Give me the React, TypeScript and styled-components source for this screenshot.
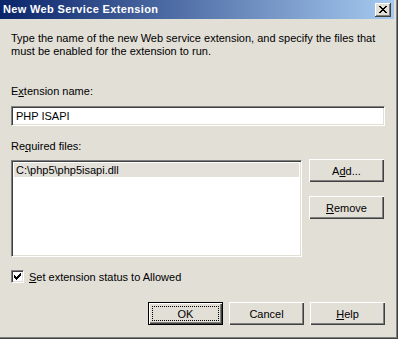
import React from "react";
import styled, { createGlobalStyle } from "styled-components";

const GlobalStyle = createGlobalStyle`
  html, body {
    margin: 0;
    padding: 0;
    background: #e2dfd7;
  }
  body {
    font-family: Tahoma, "Liberation Sans", Arial, sans-serif;
    font-size: 11px;
    color: #000;
  }
`;

const Window = styled.div`
  width: 398px;
  height: 339px;
  box-sizing: border-box;
  background: #e2dfd7;
  border-right: 1px solid #404040;
  border-bottom: 1px solid #404040;
  box-shadow: inset -1px -1px 0 #808080;
  display: flex;
  flex-direction: column;
`;

const TitleBar = styled.div`
  height: 19px;
  margin-right: 3px;
  background: linear-gradient(to right, #0a246a, #a6caf0);
  display: flex;
  align-items: center;
  padding: 0 3px 0 3px;
`;

const Title = styled.span`
  flex: 1;
  color: #fff;
  font-weight: bold;
  font-size: 11px;
  letter-spacing: 0.35px;
  line-height: 19px;
  white-space: nowrap;
`;

const CloseButton = styled.button`
  width: 16px;
  height: 14px;
  padding: 0;
  background: #e2dfd7;
  border: none;
  box-shadow: inset -1px -1px 0 #404040, inset 1px 1px 0 #fff,
    inset -2px -2px 0 #808080;
  display: flex;
  align-items: center;
  justify-content: center;
`;

const Body = styled.div`
  flex: 1;
  padding: 13px 12px 0 11px;
  display: flex;
  flex-direction: column;
`;

const Text = styled.p<{ $top?: number }>`
  margin: ${({ $top }) => $top ?? 0}px 0 0 0;
  line-height: 13px;
`;

const TextInput = styled.div`
  margin-top: 8px;
  height: 20px;
  box-sizing: border-box;
  background: #fff;
  border-top: 1px solid #808080;
  border-left: 1px solid #808080;
  border-right: 1px solid #fff;
  border-bottom: 1px solid #fff;
  box-shadow: inset 1px 1px 0 #404040, inset -1px -1px 0 #e2dfd7;
  padding: 0 4px;
  line-height: 18px;
`;

const FilesRow = styled.div`
  margin-top: 6px;
  display: flex;
  gap: 7px;
`;

const ListBox = styled.div`
  margin-top: 1px;
  width: 291px;
  height: 97px;
  box-sizing: border-box;
  background: #fff;
  border-top: 1px solid #808080;
  border-left: 1px solid #808080;
  border-right: 1px solid #fff;
  border-bottom: 1px solid #fff;
  box-shadow: inset 1px 1px 0 #404040, inset -1px -1px 0 #e2dfd7;
  padding: 2px 2px;
`;

const ListItem = styled.div<{ $selected?: boolean }>`
  height: 14px;
  line-height: 14px;
  padding-left: 2px;
  background: ${({ $selected }) => ($selected ? "#e3e1da" : "transparent")};
`;

const SideButtons = styled.div`
  display: flex;
  flex-direction: column;
  gap: 14px;
`;

const Button = styled.button<{ $default?: boolean }>`
  width: 75px;
  height: 23px;
  padding: 0;
  font: inherit;
  color: #000;
  background: #e2dfd7;
  border: none;
  position: relative;
  box-shadow: ${({ $default }) =>
    $default
      ? "inset 0 0 0 1px #000, inset 1px 1px 0 1px #fff, inset -1px -1px 0 1px #404040, inset -2px -2px 0 1px #808080"
      : "inset 1px 1px 0 #fff, inset -1px -1px 0 #404040, inset -2px -2px 0 #808080"};
`;

const FocusRing = styled.span`
  position: absolute;
  left: 4px;
  top: 4px;
  right: 4px;
  bottom: 4px;
  border: 1px dotted #000;
`;

const CheckRow = styled.label`
  margin-top: 13px;
  display: flex;
  align-items: center;
  gap: 5px;
  height: 13px;
`;

const CheckBox = styled.span`
  width: 13px;
  height: 13px;
  box-sizing: border-box;
  background: #fff;
  border-top: 1px solid #808080;
  border-left: 1px solid #808080;
  border-right: 1px solid #fff;
  border-bottom: 1px solid #fff;
  box-shadow: inset 1px 1px 0 #404040, inset -1px -1px 0 #e2dfd7;
  display: flex;
  align-items: center;
  justify-content: center;
`;

const ButtonRow = styled.div`
  margin-top: 19px;
  display: flex;
  justify-content: flex-end;
  gap: 6px;
`;

export default function App() {
  return (
    <>
      <GlobalStyle />
      <Window>
        <TitleBar>
          <Title>New Web Service Extension</Title>
          <CloseButton aria-label="Close">
            <svg width="8" height="7" viewBox="0 0 8 7">
              <path
                d="M0 0h2v1h1v1h2V1h1V0h2v1H7v1H6v1H5v1h1v1h1v1h1v1H6V6H5V5H3v1H2v1H0V6h1V5h1V4h1V3H2V2H1V1H0z"
                fill="#000"
              />
            </svg>
          </CloseButton>
        </TitleBar>
        <Body>
          <Text>
            Type the name of the new Web service extension, and specify the files that
            <br />
            must be enabled for the extension to run.
          </Text>
          <Text $top={27}>
            E<u>x</u>tension name:
          </Text>
          <TextInput>PHP ISAPI</TextInput>
          <Text $top={14}>
            Re<u>q</u>uired files:
          </Text>
          <FilesRow>
            <ListBox>
              <ListItem $selected>C:\php5\php5isapi.dll</ListItem>
            </ListBox>
            <SideButtons>
              <Button>
                A<u>d</u>d...
              </Button>
              <Button>
                <u>R</u>emove
              </Button>
            </SideButtons>
          </FilesRow>
          <CheckRow>
            <CheckBox>
              <svg width="7" height="7" viewBox="0 0 7 7">
                <path d="M0 2h1v1h1v1h1V3h1V2h1V1h1V0h1v3H6v1H5v1H4v1H3v1H2V6H1V5H0z" fill="#000" />
              </svg>
            </CheckBox>
            <span>
              <u>S</u>et extension status to Allowed
            </span>
          </CheckRow>
          <ButtonRow>
            <Button $default>
              <FocusRing />
              OK
            </Button>
            <Button>Cancel</Button>
            <Button>
              <u>H</u>elp
            </Button>
          </ButtonRow>
        </Body>
      </Window>
    </>
  );
}
